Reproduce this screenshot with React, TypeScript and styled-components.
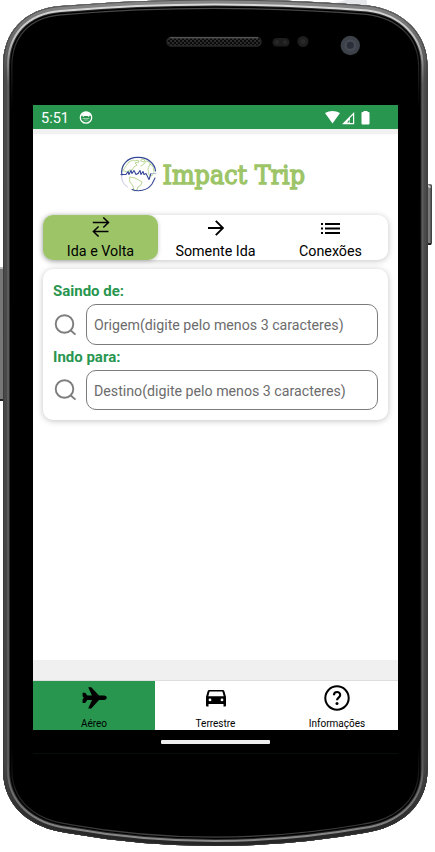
import React from 'react';
import styled, { createGlobalStyle } from 'styled-components';

const GREEN = '#28964f';
const LIME = '#9dc568';

const GlobalStyle = createGlobalStyle`
  * { box-sizing: border-box; }
  body { margin: 0; background: #fff; font-family: Roboto, 'Liberation Sans', sans-serif; overflow: hidden; }
  svg { display: block; flex: none; }
`;

const Device = styled.div`
  position: relative;
  width: 435px;
  height: 852px;
  padding: 105px 37px 0 33px;
  overflow: hidden;
`;

const FrameArt = styled.svg`
  position: absolute;
  inset: 0;
`;

const Screen = styled.main`
  position: relative;
  display: flex;
  flex-direction: column;
  width: 365px;
  height: 649px;
  background: #000;
  border-bottom: 1px solid #020f0b;
`;

const StatusBar = styled.header`
  display: flex;
  align-items: center;
  height: 24px;
  padding: 1px 27px 0 8px;
  background: ${GREEN};
  color: #fff;
`;

const Clock = styled.span`
  width: 38px;
  padding-top: 1px;
  font-size: 14.5px;
  line-height: 23px;
`;

const StatusIcons = styled.div`
  display: flex;
  align-items: center;
  margin-left: auto;
`;

const Page = styled.div`
  display: flex;
  flex-direction: column;
  height: 531px;
  padding: 0 10px;
  background: #fff;
  border-top: 5px solid #f1f1f1;
  flex: none;
`;

const LogoRow = styled.div`
  display: flex;
  justify-content: center;
  height: 81px;
  padding: 20px 0 0;
`;

const LogoArt = styled.svg`
  overflow: visible;
`;

const Card = styled.section`
  background: #fff;
  border-radius: 10px;
  box-shadow: 0 1px 6px rgba(0, 0, 0, 0.24);
`;

const TripTabs = styled(Card)`
  display: grid;
  grid-template-columns: repeat(3, 1fr);
  grid-template-rows: 45px;
  height: 45px;
`;

const TripTab = styled.button<{ $active?: boolean }>`
  display: flex;
  flex-direction: column;
  align-items: center;
  padding: 0;
  border: 0;
  border-radius: 10px;
  background: ${(p) => (p.$active ? LIME : 'transparent')};
  box-shadow: ${(p) => (p.$active ? '0 1px 4px rgba(0,0,0,.22)' : 'none')};
  color: #000;
  font: 400 14.3px/18px Roboto, sans-serif;
`;

const TabIcon = styled.span<{ $lift?: boolean }>`
  display: flex;
  align-items: center;
  height: 27px;
  padding-bottom: ${(p) => (p.$lift ? '3px' : '1px')};
`;

const SearchCard = styled(Card)`
  height: 151px;
  margin-top: 9px;
  padding: 13px 10px 0;
`;

const FieldLabel = styled.label`
  display: block;
  height: 22px;
  color: ${GREEN};
  font-size: 15px;
  font-weight: 700;
  line-height: 19px;
`;

const FieldRow = styled.div`
  display: flex;
  align-items: center;
  gap: 8px;
  height: 41px;
  margin-bottom: 2.5px;
`;

const Field = styled.input`
  flex: 1;
  min-width: 0;
  height: 40.5px;
  padding: 1px 7px 0;
  border: 1px solid #7c7c7c;
  border-radius: 10px;
  background: #fff;
  font: 400 14.2px Roboto, sans-serif;
  &::placeholder { color: #6c6c6c; opacity: 1; }
`;

const Spacer = styled.div`
  height: 20px;
  background: #f0f0f0;
  flex: none;
`;

const BottomNav = styled.nav`
  display: grid;
  grid-template-columns: 122px 121px 122px;
  grid-template-rows: 49px;
  height: 50px;
  border-top: 1px solid #ddd;
  background: #fff;
  flex: none;
`;

const NavItem = styled.button<{ $active?: boolean }>`
  display: flex;
  flex-direction: column;
  align-items: center;
  justify-content: flex-start;
  padding: 0;
  border: 0;
  background: ${(p) => (p.$active ? GREEN : '#fff')};
  color: #000;
  font: 400 10px/13px Roboto, sans-serif;
`;

const NavIcon = styled.span`
  display: flex;
  align-items: center;
  height: 36px;
  padding-bottom: 2px;
`;

const HomeArea = styled.footer`
  display: flex;
  justify-content: center;
  padding-top: 10px;
`;

const HomeHandle = styled.div`
  width: 109px;
  height: 4px;
  border-radius: 1px;
  background: #eee;
`;

const OUTLINE =
  'M3 66 C3 32 24 9 60 6 Q137 -.5 215 -.5 Q293 -.5 368 5.5 C404 10 427.5 34 427.5 66 V770 C427.5 806 400 828 364 833 Q290 846 215 846 Q140 846 67 833 C30 828 3 806 3 770Z';

const PhoneFrame = () => (
  <FrameArt width="435" height="852" viewBox="0 0 435 852" aria-hidden>
    <defs>
      <linearGradient id="rim" x1="0" y1="0" x2="0" y2="1">
        <stop offset="0" stopColor="#888" />
        <stop offset=".09" stopColor="#4c4c4c" />
        <stop offset=".9" stopColor="#444" />
        <stop offset="1" stopColor="#242424" />
      </linearGradient>
      <linearGradient id="shine" x1="0" y1="0" x2="0" y2="1">
        <stop offset="0" stopColor="#ddd" />
        <stop offset=".05" stopColor="#bbb" />
        <stop offset=".1" stopColor="#5c5c5c" />
        <stop offset=".9" stopColor="#5a5a5a" />
        <stop offset="1" stopColor="#8e8e8e" />
      </linearGradient>
      <linearGradient id="inner" x1="0" y1="0" x2="0" y2="1">
        <stop offset="0" stopColor="#505050" />
        <stop offset=".08" stopColor="#222" />
        <stop offset=".13" stopColor="#000" />
        <stop offset=".88" stopColor="#000" />
        <stop offset="1" stopColor="#484848" />
      </linearGradient>
      <linearGradient id="key" x1="0" y1="0" x2="1" y2="0">
        <stop offset="0" stopColor="#444" />
        <stop offset=".5" stopColor="#888" />
        <stop offset="1" stopColor="#333" />
      </linearGradient>
      <pattern id="mesh" width="4" height="4" patternUnits="userSpaceOnUse">
        <rect width="4" height="4" fill="#2d2d2d" />
        <circle cx="1" cy="1" r="1.2" fill="#080808" />
        <circle cx="3" cy="3" r="1.2" fill="#080808" />
      </pattern>
      <clipPath id="body"><path d={OUTLINE} /></clipPath>
    </defs>
    <path d="M327 5 346 0h21v8h-40z" fill="#e6e7eb" />
    <rect x="-2" y="267" width="6" height="134" rx="2" fill="#777" />
    <path d="M0 268h3" stroke="#bbb" strokeWidth="2" />
    <path d="M0 400h3" stroke="#222" strokeWidth="2" />
    <rect x="426" y="184" width="6" height="61" rx="2" fill="url(#key)" />
    <path d="M427.5 185.5l3 2" stroke="#ccc" strokeWidth="2" />
    <path d="M427 244h4" stroke="#222" strokeWidth="2" />
    <g clipPath="url(#body)">
      <path d={OUTLINE} fill="#000" stroke="url(#inner)" strokeWidth="19" />
      <path d={OUTLINE} fill="none" stroke="#000" strokeWidth="16.5" />
      <path d={OUTLINE} fill="none" stroke="#2b2b2b" strokeWidth="14" />
      <path d={OUTLINE} fill="none" stroke="url(#shine)" strokeWidth="12" />
      <path d={OUTLINE} fill="none" stroke="url(#rim)" strokeWidth="8" />
      <path d={OUTLINE} fill="none" stroke="#333" strokeOpacity=".6" strokeWidth="2" />
    </g>
    <rect x="167" y="37.5" width="94" height="8.5" rx="4" fill="url(#mesh)" stroke="#292929" strokeWidth="1.3" />
    <path d="M170 37.800h88" stroke="#666" />
    <rect x="272.5" y="38" width="17" height="8.5" rx="4.25" fill="#1d1d1d" />
    <circle cx="277" cy="42.3" r="2" fill="#292929" />
    <circle cx="285" cy="42.3" r="2" fill="#292929" />
    <circle cx="303" cy="41.5" r="5.5" fill="#1e1e1e" />
    <circle cx="303" cy="41.5" r="2.5" fill="#292929" />
    <circle cx="350.3" cy="45.5" r="9.7" fill="#3d424a" />
    <circle cx="350.3" cy="45.5" r="6" fill="#444952" />
    <circle cx="350.3" cy="45.3" r="3.5" fill="#292e39" />
  </FrameArt>
);

const Logo = () => (
  <LogoArt width="191" height="42" viewBox="120 154 191 42" role="img" aria-label="Impact Trip">
    <g fill="none" strokeLinecap="round" strokeLinejoin="round">
      <g stroke={LIME} strokeWidth=".7">
        <path d="M126 166l3-4 4-2 2 1 3-1 1 2-4 1 2 2-3 2-2 3-3 0-1 3-3-2-2 0zM142 159l3 1-1 2-3-1z" />
        <path d="M130 177l5 1 7 4-1 3-3 2-1 3-3 1-1-5-3-4z" />
        <path d="M141 166l3-2 2-3 3 1 2 3M150 164l-2 5 1 6 3 1 2-4-1-6z" strokeDasharray="3 1" />
      </g>
      <path d="M122 175C120 165 128 157 138 157.400C148 157 155 164 155.500 171" stroke="#354897" strokeWidth="1.2" />
      <path d="M132 189.500C138 192 147 191 152 184L155 178" stroke="#354897" strokeWidth="1.1" />
      <path d="M121.500 175.500q0 8 6 11.500" stroke="#9ba5cc" strokeWidth=".6" />
      <path d="M121 174.500h5l2-3 1 3 2-4 1 3 2-3 2 4 2-1" stroke="#354897" strokeWidth="1.1" />
      <path d="M138 173.500l2-3 1 4 2-3 1 3 2-1 3 6 2-6" stroke="#354897" strokeWidth="1.1" />
      <path d="M151 173.500h5" stroke="#9ba5cc" strokeWidth=".7" />
    </g>
    <text x="162.5" y="184.2" textLength="142.5" lengthAdjust="spacingAndGlyphs" fill={LIME} stroke={LIME} strokeWidth="1.4" fontFamily="'DejaVu Serif', serif" fontSize="26.5">
      Impact Trip
    </text>
  </LogoArt>
);

const DebugIcon = () => (
  <svg width="14" height="14" viewBox="0 0 14 14">
    <circle cx="7" cy="6.5" r="5.7" fill="none" stroke="#fff" strokeWidth="1.3" />
    <path d="M2 5Q3 .7 7 .7T12 5L10.500 4.500 10 6 8.500 5H5.500L4 6 3.500 4.500z" fill="#fff" />
    <path d="M3.500 7.500h7M5 9.500l1-1 1 1 1-1 1 1" stroke="#b2dabf" strokeWidth=".8" fill="none" />
  </svg>
);

const SignalIcons = () => (
  <svg width="46" height="14" viewBox="325 110.5 46 14">
    <path d="M325 112.500Q332.500 108.500 340 112.500L332.500 123z" fill="#fff" />
    <path d="M343.500 123.200 353.600 113V123.200z" fill="none" stroke="#fff" strokeWidth="1.2" />
    <path d="M342.500 123.500 350 116V123.500z" fill="#fff" />
    <path d="M347 122 349.500 119v3z" fill={GREEN} />
    <path d="M361.500 112.500q0-1 1-1h1V110.500h4v1h1q1 0 1 1v10.500q0 1-1 1h-6q-1 0-1-1z" fill="#fff" />
  </svg>
);

const SwapIcon = () => (
  <svg width="18" height="20" viewBox="0 0 18 20" fill="none" stroke="#000" strokeWidth="1.5">
    <path d="M.8 5.500H16.500M11.300 .5 16.500 5.500 11.300 10.500M16.500 14.500H1.400M6.600 9.500 1.400 14.500 6.600 19.500" />
  </svg>
);

const ArrowIcon = () => (
  <svg width="16" height="16" viewBox="0 0 16 16" fill="none" stroke="#000" strokeWidth="1.9">
    <path d="M0 8H14.500M7.800 .8 15 8 7.800 15.200" />
  </svg>
);

const ListIcon = () => (
  <svg width="19" height="11" viewBox="0 0 19 11">
    <path d="M0 0h2v2H0zM4 0H19v2H4zM0 4.500h2v2H0zM4 4.500H19v2H4zM0 9h2v2H0zM4 9H19v2H4z" />
  </svg>
);

const SearchIcon = () => (
  <svg width="25" height="24" viewBox="0 0 25 24" fill="none" stroke="#7d7d7d" strokeWidth="1.9">
    <circle cx="11.5" cy="11" r="8.8" />
    <path d="M17.500 17.200 22.500 21.600" />
  </svg>
);

const PlaneIcon = () => (
  <svg width="25" height="22" viewBox="0 0 25 22">
    <path d="M6.200.3H9.300L17 8.600H22.300Q24.800 9 24.800 10.800T22.300 13H17L9.300 21.400H6.200L10 13H5.300L3.200 15.900H.6V12.500L1.800 10.800.6 9.200V5.700H3.200L5.300 8.600H10z" />
  </svg>
);

const CarIcon = () => (
  <svg width="20" height="17" viewBox="0 0 20 17">
    <path fillRule="evenodd" d="M3.200 0H16.800Q18 0 18.400 1.200L20 7V15.500Q20 16.500 19.200 16.500H17.500V14H2.500V16.500H.8Q0 16.500 0 15.500V7L1.600 1.200Q2 0 3.200 0zM3.600 1.500 2.300 6.200H17.700L16.400 1.500zM4 8.500a1.400 1.400 0 100 2.800 1.400 1.400 0 000-2.800zM16 8.500a1.400 1.400 0 100 2.800 1.400 1.400 0 000-2.800z" />
  </svg>
);

const HelpIcon = () => (
  <svg width="26" height="26" viewBox="0 0 26 26" fill="none" stroke="#000" strokeWidth="2">
    <circle cx="13" cy="13" r="11.7" />
    <path d="M9.900 10.300C10 6 16.200 6 16.200 10.100C16.200 12.700 13 12.500 13 15.300" strokeWidth="2.1" />
    <circle cx="13" cy="18.5" r="1.5" fill="#000" stroke="none" />
  </svg>
);

const trips = [
  { label: 'Ida e Volta', icon: <SwapIcon /> },
  { label: 'Somente Ida', icon: <ArrowIcon /> },
  { label: 'Conexões', icon: <ListIcon /> },
];

const sections = [
  { label: 'Aéreo', icon: <PlaneIcon /> },
  { label: 'Terrestre', icon: <CarIcon /> },
  { label: 'Informações', icon: <HelpIcon /> },
];

const fields = [
  { id: 'origin', label: 'Saindo de:', hint: 'Origem(digite pelo menos 3 caracteres)' },
  { id: 'destination', label: 'Indo para:', hint: 'Destino(digite pelo menos 3 caracteres)' },
];

export default function App() {
  return (
    <Device>
      <GlobalStyle />
      <PhoneFrame />
      <Screen>
        <StatusBar>
          <Clock>5:51</Clock>
          <DebugIcon />
          <StatusIcons><SignalIcons /></StatusIcons>
        </StatusBar>
        <Page>
          <LogoRow><Logo /></LogoRow>
          <TripTabs>
            {trips.map((t, i) => (
              <TripTab key={t.label} $active={i === 0}>
                <TabIcon $lift={i === 0}>{t.icon}</TabIcon>
                {t.label}
              </TripTab>
            ))}
          </TripTabs>
          <SearchCard>
            {fields.map((f) => (
              <React.Fragment key={f.id}>
                <FieldLabel htmlFor={f.id}>{f.label}</FieldLabel>
                <FieldRow>
                  <SearchIcon />
                  <Field id={f.id} placeholder={f.hint} />
                </FieldRow>
              </React.Fragment>
            ))}
          </SearchCard>
        </Page>
        <Spacer />
        <BottomNav>
          {sections.map((s, i) => (
            <NavItem key={s.label} $active={i === 0}>
              <NavIcon>{s.icon}</NavIcon>
              {s.label}
            </NavItem>
          ))}
        </BottomNav>
        <HomeArea><HomeHandle /></HomeArea>
      </Screen>
    </Device>
  );
}
